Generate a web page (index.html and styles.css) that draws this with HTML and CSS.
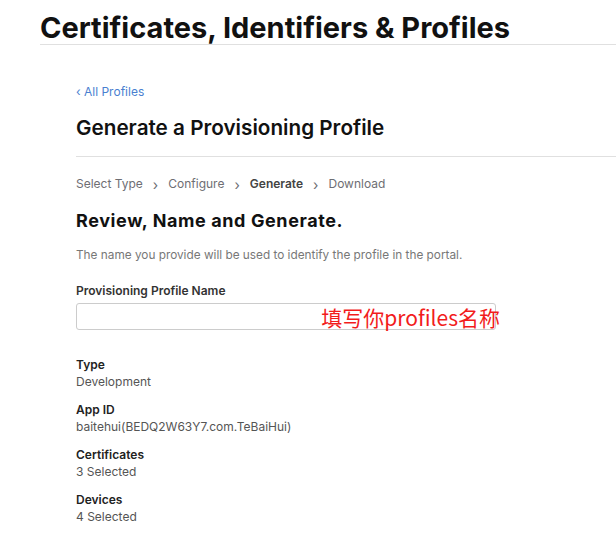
FILE: index.html
```html
<!DOCTYPE html>
<html lang="en">
<head>
  <meta charset="UTF-8">
  <title>Certificates, Identifiers &amp; Profiles</title>
  <link rel="stylesheet" href="styles.css">
</head>
<body>

<header class="page-head">
  <h1>Certificates, Identifiers &amp; Profiles</h1>
</header>

<main class="content">
  <a class="back" href="#">&lsaquo; All Profiles</a>
  <h2 class="title">Generate a Provisioning Profile</h2>

  <ul class="steps">
    <li>Select Type</li>
    <li class="sep">&rsaquo;</li>
    <li>Configure</li>
    <li class="sep">&rsaquo;</li>
    <li class="current">Generate</li>
    <li class="sep">&rsaquo;</li>
    <li>Download</li>
  </ul>

  <h3 class="section">Review, Name and Generate.</h3>
  <p class="hint">The name you provide will be used to identify the profile in the portal.</p>

  <label class="field-label" for="pname">Provisioning Profile Name</label>
  <div class="field">
    <input type="text" id="pname">
    <span class="note">填写你profiles名称</span>
  </div>

  <dl class="summary">
    <dt>Type</dt><dd>Development</dd>
    <dt>App ID</dt><dd>baitehui(BEDQ2W63Y7.com.TeBaiHui)</dd>
    <dt>Certificates</dt><dd>3 Selected</dd>
    <dt>Devices</dt><dd>4 Selected</dd>
  </dl>
</main>

</body>
</html>
```

FILE: styles.css
```css
body { margin:0; background:#fff; color:#111; font-family:Inter, "Liberation Sans", sans-serif; }
a { text-decoration:none; }

/* top bar */
.page-head { padding:12px 0 0 40px; }
.page-head h1 { margin:0; font-size:29px; font-weight:700; line-height:32px; letter-spacing:0; border-bottom:1px solid #e0e0e0; }

/* main column */
.content { padding:39px 0 0 76px; }
.back { display:block; color:#4a7fd0; font-size:12px; line-height:16px; }
.title { margin:15px 0 0; font-size:20.7px; font-weight:600; line-height:25px; padding-bottom:16px; border-bottom:1px solid #e0e0e0; }

.steps { list-style:none; display:flex; margin:19px 0 0; padding:0; font-size:12px; line-height:16px; color:#6e6e73; }
.steps li.sep { margin:0 10px; font-size:14px; line-height:18px; }
.steps li.current { color:#444; font-weight:600; }

.section { margin:16px 0 0; font-size:18px; font-weight:700; line-height:22px; letter-spacing:0.6px; }
.hint { margin:15px 0 0; font-size:11.8px; line-height:16px; color:#777; }

.field-label { display:block; margin-top:20px; font-size:12px; font-weight:600; line-height:16px; color:#333; }
.field { position:relative; width:420px; margin-top:4px; }
.field input { display:block; box-sizing:border-box; width:100%; height:27px; border:1px solid #ccc; border-radius:3px; }
.note { position:absolute; right:-4px; top:0; color:#f21c1c; font-size:21px; line-height:28px; font-family:"Microsoft YaHei", "Noto Sans CJK SC", sans-serif; }

.summary { margin:26px 0 0; font-size:12px; line-height:17px; }
.summary dt { font-weight:600; color:#222; }
.summary dd { margin:0 0 11px; color:#555; }
```
